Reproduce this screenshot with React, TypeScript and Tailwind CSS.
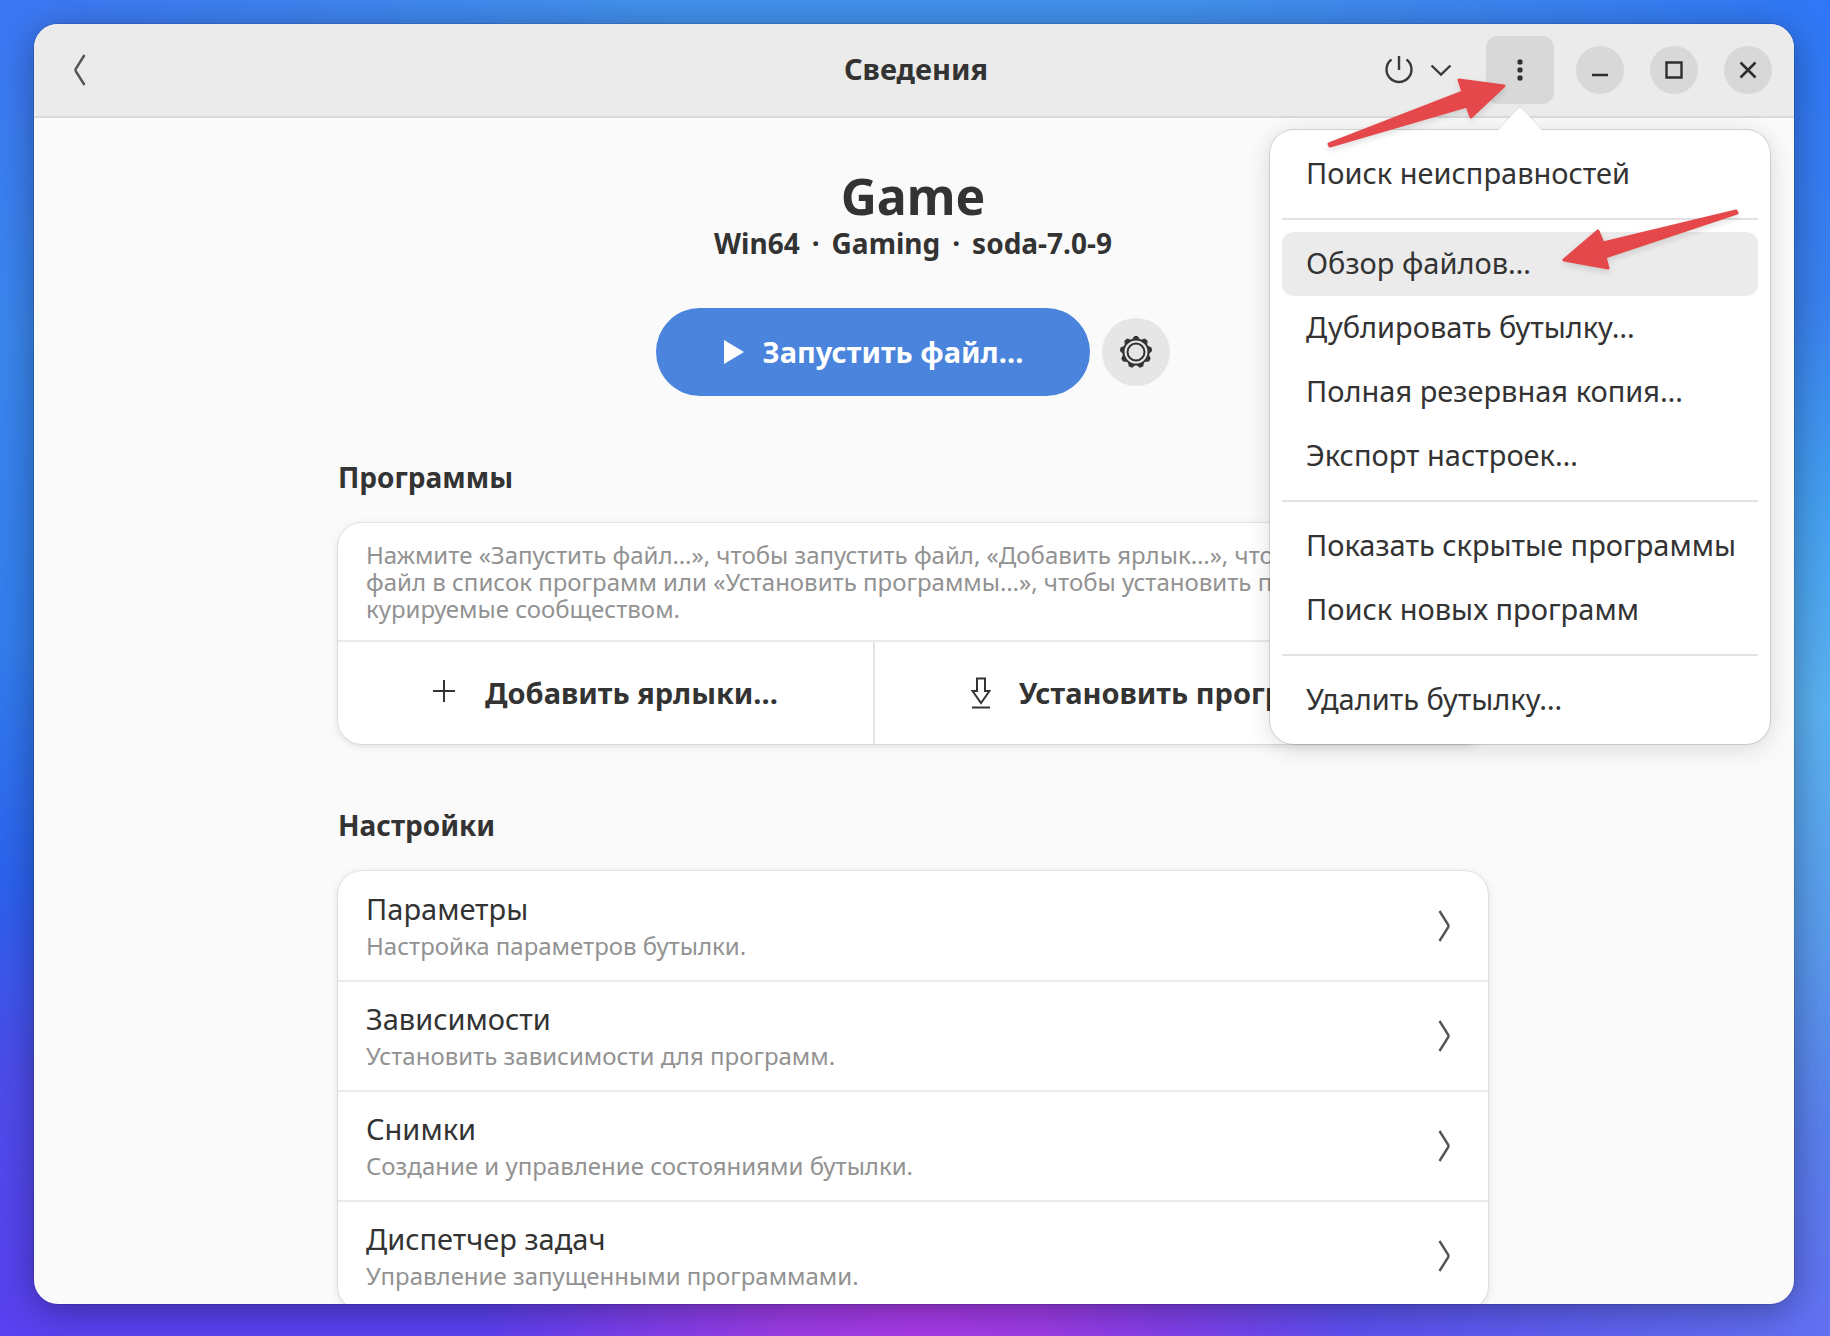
const MENU = [
  ["Поиск неисправностей"],
  ["Обзор файлов…", "Дублировать бутылку…", "Полная резервная копия…", "Экспорт настроек…"],
  ["Показать скрытые программы", "Поиск новых программ"],
  ["Удалить бутылку…"],
];

const ACTIVE_ITEM = "Обзор файлов…";

const SETTINGS = [
  { title: "Параметры", desc: "Настройка параметров бутылки." },
  { title: "Зависимости", desc: "Установить зависимости для программ." },
  { title: "Снимки", desc: "Создание и управление состояниями бутылки." },
  { title: "Диспетчер задач", desc: "Управление запущенными программами." },
];

function Wallpaper() {
  return (
    <div className="absolute inset-0 bg-[linear-gradient(180deg,#3b76f4_0%,#3a86ee_25%,#337eee_48%,#2b62ee_66%,#4c4cea_80%,#5a40f0_100%)]">
      <div className="absolute inset-0 bg-[linear-gradient(180deg,#2f77f6_0%,#3a80f0_22%,#45a0f0_38%,#5cb2f0_53%,#5a9cec_70%,#5a80ec_85%,#6270f2_100%)] [mask-image:linear-gradient(90deg,transparent_60%,black_100%)]" />
      <div className="absolute inset-0 bg-[radial-gradient(50%_12%_at_50%_0%,#4290ec_0%,#4290ec_30%,transparent_100%)]" />
      <div className="absolute inset-0 bg-[radial-gradient(24%_24%_at_50%_100%,#a83ae8_0%,#9c3ce6_30%,transparent_100%)]" />
    </div>
  );
}

function ChevronIcon({ className }: { className?: string }) {
  return (
    <svg viewBox="0 0 12 32" className={`w-3 h-8 ${className ?? ""}`} fill="none" stroke="#555" strokeWidth="2.400">
      <path d="M1.500 1 10 14.500Q11 16 10 17.500L1.500 31" />
    </svg>
  );
}

function GearIcon() {
  const teeth = Array.from({ length: 9 }, (_, i) => i * 40);
  return (
    <svg viewBox="-16 -16 32 32" className="w-8 h-8" fill="none" stroke="#333">
      <circle r="12.500" strokeWidth="2" />
      <circle r="8.500" strokeWidth="2" />
      {teeth.map((a) => (
        <path key={a} d="M-3 -13.200 -1.500 -15.500H1.500L3 -13.200Z" fill="#333" strokeWidth="1" transform={`rotate(${a})`} />
      ))}
    </svg>
  );
}

function Header() {
  return (
    <header className="grid grid-cols-[1fr_auto_1fr] items-center h-[94px] shrink-0 pl-[26px] pr-[22px] bg-[#ebebeb] border-b-2 border-[#dadada]">
      <button aria-label="Назад" className="w-10 h-14 flex items-center justify-center justify-self-start">
        <ChevronIcon className="rotate-180" />
      </button>
      <h1 className="pb-0.5 text-[29px] leading-9 font-bold">Сведения</h1>
      <div className="flex items-center justify-end">
        <button aria-label="Питание" className="flex items-center gap-4 mr-[34px]">
          <svg viewBox="0 0 30 30" className="w-[30px] h-[30px]" fill="none" stroke="#3a3a3a" strokeWidth="2.400">
            <path d="M15 1V15M7.500 4.500A12.500 12.500 0 1 0 22.500 4.500" />
          </svg>
          <svg viewBox="0 0 22 14" className="w-[22px] h-3.5" fill="none" stroke="#3a3a3a" strokeWidth="2.400">
            <path d="M1.500 2.500 11 11.500 20.500 2.500" />
          </svg>
        </button>
        <button aria-label="Меню" aria-expanded="true" className="w-[68px] h-[68px] mr-[22px] rounded-xl bg-[#d8d8d8] flex items-center justify-center">
          <svg viewBox="0 0 6 22" className="w-1.5 h-[22px]" fill="#2e2e2e">
            <rect x="0.500" y="0.500" width="5" height="5" rx="1.500" />
            <rect x="0.500" y="8.500" width="5" height="5" rx="1.500" />
            <rect x="0.500" y="16.500" width="5" height="5" rx="1.500" />
          </svg>
        </button>
        <div className="flex gap-[26px]">
          <button aria-label="Свернуть" className="w-12 h-12 rounded-full bg-[#d8d8d8] flex items-center justify-center">
            <svg viewBox="0 0 20 20" className="w-5 h-5" fill="none" stroke="#2e2e2e" strokeWidth="2.400">
              <path d="M2 15H18" />
            </svg>
          </button>
          <button aria-label="Развернуть" className="w-12 h-12 rounded-full bg-[#d8d8d8] flex items-center justify-center">
            <svg viewBox="0 0 20 20" className="w-5 h-5" fill="none" stroke="#2e2e2e" strokeWidth="2.400">
              <path d="M2.500 2.500H17.500V17.500H2.500Z" />
            </svg>
          </button>
          <button aria-label="Закрыть" className="w-12 h-12 rounded-full bg-[#d8d8d8] flex items-center justify-center">
            <svg viewBox="0 0 20 20" className="w-5 h-5" fill="none" stroke="#2e2e2e" strokeWidth="2.600">
              <path d="M2.500 2.500 17.500 17.500M17.500 2.500 2.500 17.500" />
            </svg>
          </button>
        </div>
      </div>
    </header>
  );
}

function Menu() {
  return (
    <div className="absolute top-[106px] right-6 w-[500px] rounded-3xl bg-white p-3 shadow-[0_0_0_1px_rgba(0,0,0,0.12),0_4px_24px_rgba(0,0,0,0.14)]">
      <svg viewBox="0 0 44 26" className="absolute -top-6 right-[228px] w-11 h-[26px]">
        <path d="M0 24 19 3Q22 0 25 3L44 24V26H0Z" fill="#fff" />
        <path d="M0 24 19 3Q22 0 25 3L44 24" fill="none" stroke="#000" strokeOpacity="0.1" />
      </svg>
      {MENU.map((group, i) => (
        <div key={i} className={i > 0 ? "mt-3 pt-3 border-t-2 border-[#e2e2e2]" : ""}>
          {group.map((item) => (
            <button
              key={item}
              className={`block w-full h-16 pl-6 pb-0.5 rounded-xl text-left text-[29px] leading-9 whitespace-nowrap ${item === ACTIVE_ITEM ? "bg-[#ebebeb]" : ""}`}
            >
              {item}
            </button>
          ))}
        </div>
      ))}
    </div>
  );
}

// красные стрелки-указатели поверх окна
function Arrows() {
  return (
    <svg viewBox="0 0 440 220" className="absolute top-[46px] right-[34px] w-[440px] h-[220px] pointer-events-none drop-shadow-md" fill="#e5484b" stroke="#e5484b" strokeLinejoin="round">
      <path d="M9 74 143 22 139 10 184 16 151 47 147 36 10 76Z" strokeWidth="3" />
      <path d="M416 141 283 173 278 161 244 190 288 198 285 187 417 143Z" strokeWidth="3" />
    </svg>
  );
}

export default function App() {
  return (
    <div className="relative h-screen overflow-hidden pt-6 pb-8 pl-[34px] pr-9 font-['Noto_Sans',sans-serif] text-[#333]">
      <Wallpaper />
      <div className="relative h-full rounded-3xl shadow-[0_0_0_1px_rgba(0,0,0,0.12),0_6px_36px_rgba(0,0,0,0.35)]">
        <div className="h-full flex flex-col rounded-3xl overflow-hidden bg-[#fafafa]">
          <Header />
          <main className="flex-1 min-h-0 overflow-hidden pr-0.5">
            <div className="w-full max-w-[1150px] mx-auto pt-12">
              <h2 className="text-[50px] leading-[60px] font-bold text-center">Game</h2>
              <p className="text-[28px] leading-[34px] font-bold flex justify-center gap-3">
                <span>Win64</span>
                <span>·</span>
                <span>Gaming</span>
                <span>·</span>
                <span>soda-7.0-9</span>
              </p>

              <div className="mt-12 flex items-center justify-center gap-3">
                <button className="w-[434px] h-[88px] rounded-full bg-[#4a84dd] text-white text-[29px] font-bold flex items-center justify-center gap-[18px]">
                  <svg viewBox="0 0 22 26" className="w-[22px] h-[26px]" fill="#fff">
                    <path d="M1 1 21 13 1 25Z" />
                  </svg>
                  Запустить файл…
                </button>
                <button aria-label="Параметры запуска" className="w-[68px] h-[68px] rounded-full bg-[#e6e6e6] flex items-center justify-center">
                  <GearIcon />
                </button>
              </div>

              <h3 className="mt-[63px] text-[28px] leading-9 font-bold">Программы</h3>
              <section className="mt-7 rounded-3xl bg-white shadow-[0_0_0_1px_rgba(0,0,0,0.06),0_2px_8px_rgba(0,0,0,0.12)]">
                <p className="px-7 py-[18px] text-[24px] leading-[27px] text-[#929292]">
                  Нажмите «Запустить файл…», чтобы запустить файл, «Добавить ярлык…», чтобы добавить
                  <br />
                  файл в список программ или «Установить программы…», чтобы установить программы,
                  <br />
                  курируемые сообществом.
                </p>
                <div className="flex h-[104px] border-t-2 border-[#ebebeb] text-[29px] font-bold whitespace-nowrap">
                  <button className="flex-[539] flex items-center justify-center gap-[30px] border-r-2 border-[#e4e4e4]">
                    <svg viewBox="0 0 22 26" className="w-[22px] h-[26px]" fill="none" stroke="#333" strokeWidth="2">
                      <path d="M11 0V22M0 11H22" />
                    </svg>
                    Добавить ярлыки…
                  </button>
                  <button className="flex-[611] flex items-center justify-center gap-7 pl-1.5">
                    <svg viewBox="0 0 20 32" className="w-5 h-8" fill="none" stroke="#333" strokeWidth="2">
                      <path d="M6 1.500H14V14H18.500L10 26 1.500 14H6ZM1 30.500H19" />
                    </svg>
                    Установить программы…
                  </button>
                </div>
              </section>

              <h3 className="mt-[63px] text-[28px] leading-9 font-bold">Настройки</h3>
              <section className="mt-7 rounded-3xl bg-white shadow-[0_0_0_1px_rgba(0,0,0,0.06),0_2px_8px_rgba(0,0,0,0.12)]">
                {SETTINGS.map((row, i) => (
                  <button
                    key={row.title}
                    className={`w-full pl-7 pr-[38px] flex items-center justify-between text-left ${i > 0 ? "h-[110px] border-t-2 border-[#ebebeb]" : "h-[109px]"}`}
                  >
                    <span>
                      <span className="block text-[29px] leading-10">{row.title}</span>
                      <span className="block text-[24px] leading-[34px] text-[#929292]">{row.desc}</span>
                    </span>
                    <ChevronIcon />
                  </button>
                ))}
              </section>
            </div>
          </main>
        </div>
        <Menu />
        <Arrows />
      </div>
    </div>
  );
}
